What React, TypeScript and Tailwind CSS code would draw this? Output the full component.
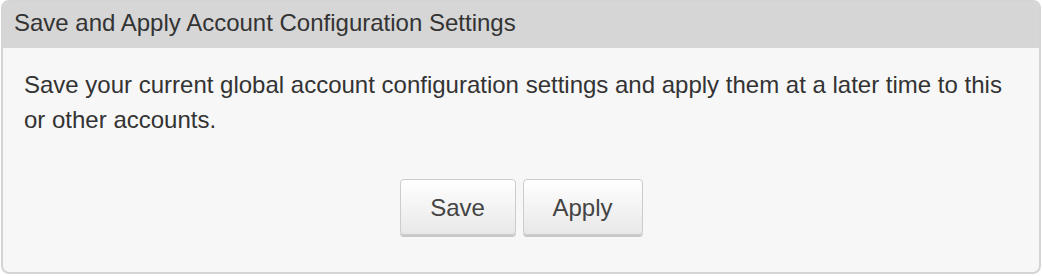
export default function App() {
  return (
    <div className="w-[1042px] h-[276px] bg-white" style={{ fontFamily: '"Liberation Sans", Arial, sans-serif' }}>
      <div className="mx-[1px] h-[274px] rounded-[8px] border-2 border-[#d4d4d4] bg-[#f7f7f7] overflow-hidden flex flex-col">
        <div className="h-[46px] shrink-0 bg-[#d6d6d6] px-[11px] pt-[9px] text-[24px] leading-[24px] text-[#333]">
          Save and Apply Account Configuration Settings
        </div>
        <div className="px-[21px] pt-[19px] text-[24px] leading-[35px] text-[#333]">
          <p>
            Save your current global account configuration settings and apply them at a later time to this or other accounts.
          </p>
          <div className="flex justify-center gap-[7px] mt-[42px]">
            <button className="w-[116px] h-[56px] rounded-[4px] border border-[#cccccc] bg-gradient-to-b from-white to-[#e8e8e8] shadow-[0_2px_0_#c8c8c8] text-[24px] text-[#444]">
              Save
            </button>
            <button className="w-[120px] h-[56px] rounded-[4px] border border-[#cccccc] bg-gradient-to-b from-white to-[#e8e8e8] shadow-[0_2px_0_#c8c8c8] text-[24px] text-[#444]">
              Apply
            </button>
          </div>
        </div>
      </div>
    </div>
  );
}
